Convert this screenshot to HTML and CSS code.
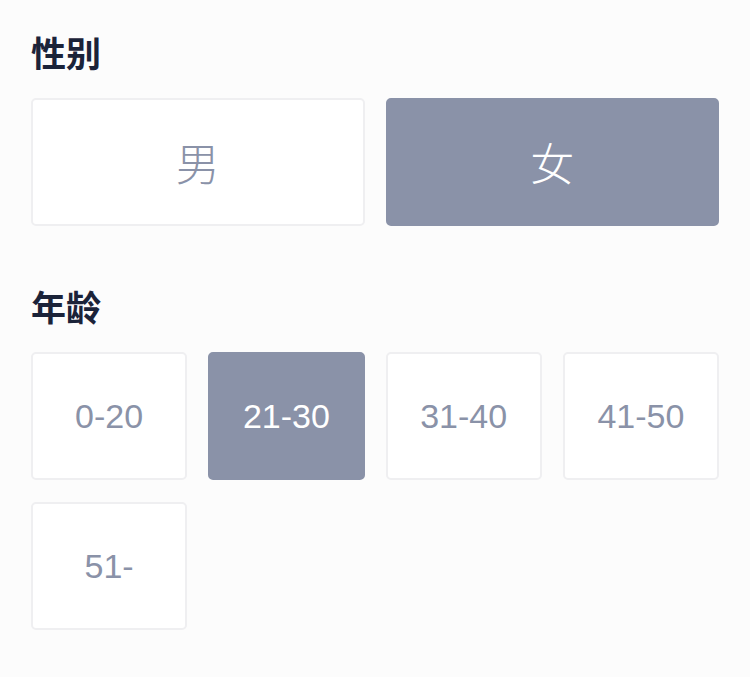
FILE: index.html
```html
<!DOCTYPE html>
<html lang="zh">
<head>
<meta charset="utf-8">
<link rel="stylesheet" href="styles.css">
</head>
<body>
<div class="page">
  <section class="group">
    <h2 class="title">性别</h2>
    <div class="options two">
      <div class="opt cjk">男</div>
      <div class="opt cjk active">女</div>
    </div>
  </section>
  <section class="group">
    <h2 class="title">年龄</h2>
    <div class="options four">
      <div class="opt">0-20</div>
      <div class="opt active">21-30</div>
      <div class="opt">31-40</div>
      <div class="opt">41-50</div>
      <div class="opt">51-</div>
    </div>
  </section>
</div>
</body>
</html>
```
FILE: styles.css
```css
html, body {
  margin: 0;
  padding: 0;
  background: #fcfcfc;
}
.page {
  padding: 22px 31px 0;
  font-family: "Liberation Sans", "Noto Sans CJK SC", sans-serif;
}
.group {
  margin-bottom: 50px;
}
.title {
  margin: 0 0 16px;
  font-size: 35px;
  line-height: 60px;
  font-weight: 700;
  color: #1b2339;
  font-family: "Noto Sans CJK SC", sans-serif;
}
.options {
  display: grid;
  gap: 22px 21px;
}
.options.two { grid-template-columns: 1fr 1fr; }
.options.four { grid-template-columns: repeat(4, 1fr); }
.opt {
  height: 128px;
  box-sizing: border-box;
  border: 2px solid #efeff1;
  border-radius: 5px;
  background: #ffffff;
  display: flex;
  align-items: center;
  justify-content: center;
  font-size: 34px;
  color: #8a92a8;
}
.opt.cjk {
  font-family: "Noto Sans CJK SC", sans-serif;
  font-weight: 300;
  font-size: 44px;
}
.opt.active {
  background: #8a92a8;
  border-color: #8a92a8;
  color: #ffffff;
}
```
